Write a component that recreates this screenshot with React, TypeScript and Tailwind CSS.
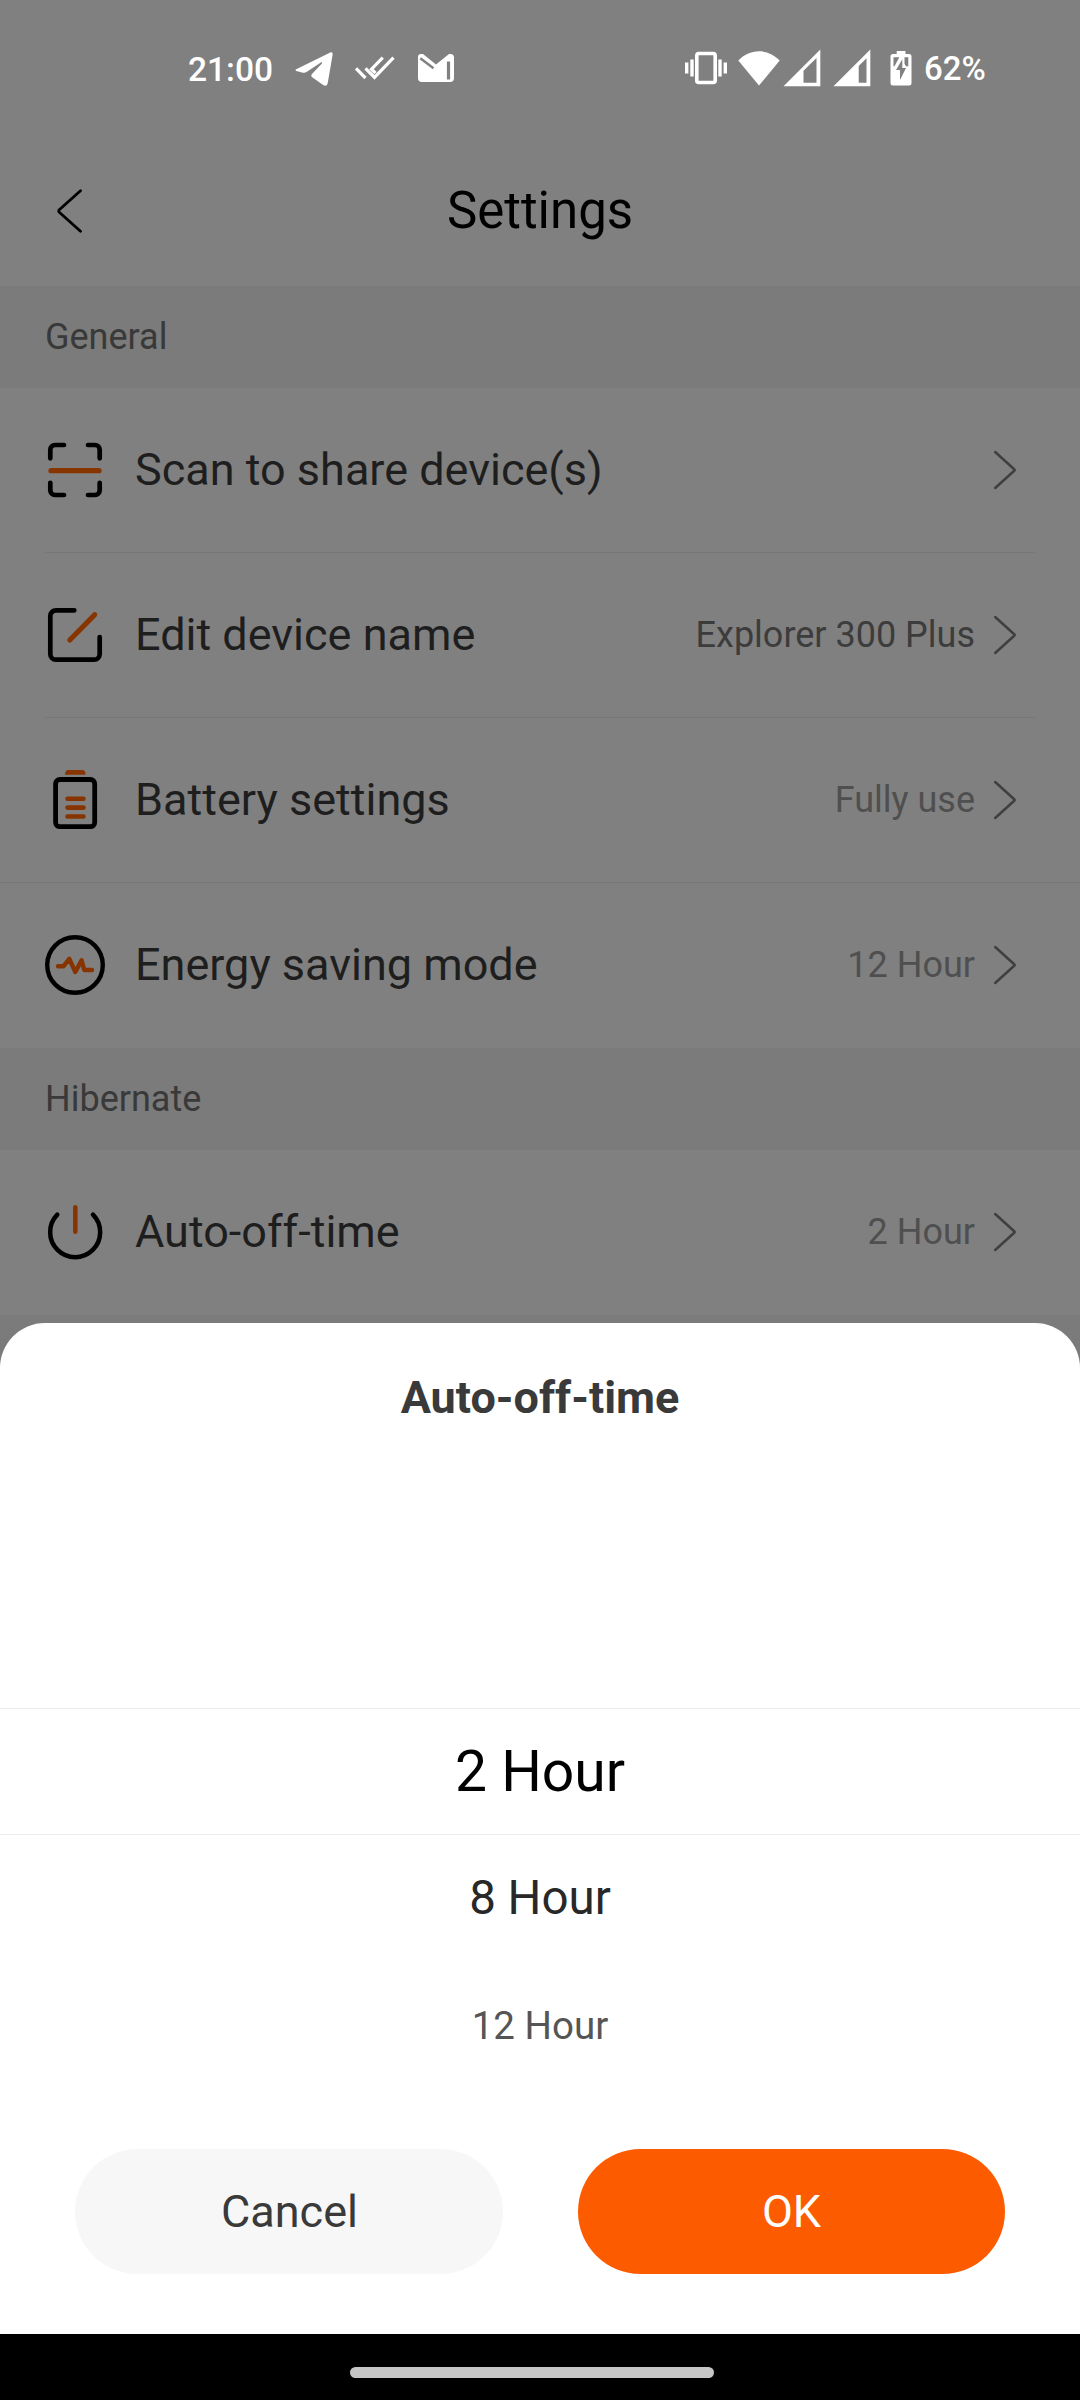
import type { ReactNode } from "react";

const INK = "#000000";
const ORANGE = "#863500";

function ScanIcon() {
  return (
    <svg width="60" height="60" viewBox="0 0 60 60" fill="none" strokeWidth="4.7" strokeLinecap="round">
      <path
        d="M5.3 18.3V9.7A4.7 4.7 0 0 1 10 5h9M43 5h7a4.700 4.700 0 0 1 4.700 4.700v8.600M5.300 42.800v7.500A4.700 4.700 0 0 0 10 55h9M43 55h7a4.700 4.700 0 0 0 4.700-4.700v-7.500"
        stroke={INK}
      />
      <path d="M6 30.700h48" stroke={ORANGE} strokeWidth="5.2" />
    </svg>
  );
}

function EditIcon() {
  return (
    <svg width="60" height="60" viewBox="0 0 60 60" fill="none" strokeWidth="4.7" strokeLinecap="round">
      <path d="M29.300 5.300H11a5.700 5.700 0 0 0-5.700 5.700v38a5.700 5.700 0 0 0 5.700 5.700h38a5.700 5.700 0 0 0 5.700-5.700V32" stroke={INK} />
      <path d="M24.800 35L49.700 9.700" stroke={ORANGE} strokeWidth="5.2" />
    </svg>
  );
}

function BatteryIcon() {
  return (
    <svg width="60" height="60" viewBox="0 0 60 60" fill="none" strokeWidth="4.8" strokeLinecap="round">
      <path d="M20 4.700c0-2.800 1.200-4.700 3.400-4.700h13.800c2.200 0 3.400 1.900 3.400 4.700z" fill={ORANGE} />
      <rect x="10.600" y="9.500" width="39.100" height="47.200" rx="4.300" stroke={INK} />
      <path d="M22.500 28.700h16M22.500 37.600h16M22.500 46.500h16" stroke={ORANGE} strokeWidth="4.600" />
    </svg>
  );
}

function EnergyIcon() {
  return (
    <svg width="60" height="60" viewBox="0 0 60 60" fill="none" strokeWidth="4.4" strokeLinecap="round" strokeLinejoin="round">
      <circle cx="30" cy="30" r="27.800" stroke={INK} />
      <path d="M13 31.300h5.300l6-7.500L30.300 37l6.300-11.700 2.700 9.700h7.700" stroke={ORANGE} />
    </svg>
  );
}

function PowerIcon() {
  return (
    <svg width="60" height="60" viewBox="0 0 60 60" fill="none" strokeWidth="4.5" strokeLinecap="round">
      <path d="M12.300 12.700a25 25 0 1 0 35.700 0" stroke={INK} />
      <path d="M30.300 5.300v24.500" stroke={ORANGE} />
    </svg>
  );
}

function Chevron() {
  return (
    <svg width="24" height="40" viewBox="0 0 24 40" fill="none" className="shrink-0">
      <path d="M2.200 2l19 17.200q1 .8 0 1.600L2.200 38" stroke="#3f3f3f" strokeWidth="2.5" strokeLinecap="round" />
    </svg>
  );
}

function StatusBar() {
  return (
    <div className="flex h-[136px] items-center pl-[188px] pr-[95px] text-[33.5px] font-medium text-white">
      <span className="w-[106px] pt-1">21:00</span>
      <svg width="40" height="36" viewBox="0 0 40 36" fill="#fff" className="mt-0.5">
        <path d="M2.200 18.300L35.800 1.700c1.900-.9 3.100.1 2.800 2L33.800 31.800c-.6 3.200-2.600 3.500-4.600 2.100L18.500 26.400c-1.700-1.300-1.600-2.400-.3-3.700L27.700 12.700c1-1.100.1-1.800-1.200-1L12.900 20.800c-1.700 1.100-3 1.200-5 .6l-5.500-1.500c-1.200-.4-1.300-1.100-.2-1.600z" />
      </svg>
      <svg width="42" height="26" viewBox="0 0 42 26" fill="none" stroke="#fff" strokeWidth="3.2" className="ml-5">
        <path d="M2 13.400l9.500 9.600M11.500 13.400l9 9L39.500 2.600M28.800 2.600L17.500 14.200l4 4" />
      </svg>
      <svg width="38" height="30" viewBox="0 0 38 30" className="ml-[21px]">
        <path d="M4 1h2l13 10.500L32 1h1.500a3.500 3.500 0 0 1 3.500 3.500V25a4 4 0 0 1-4 4H5a4 4 0 0 1-4-4V4a3 3 0 0 1 3-3z" fill="#fff" />
        <path d="M3.300 5.200L16.500 15.200" stroke="#808080" strokeWidth="2.4" />
        <path d="M31.500 8.500v18" stroke="#808080" strokeWidth="3.2" />
      </svg>

      <div className="ml-auto flex items-center">
        <svg width="44" height="34" viewBox="0 0 44 34" fill="none" stroke="#fff">
          <rect x="12.800" y="2.500" width="18.400" height="29" rx="2" strokeWidth="3.6" />
          <path d="M2.700 11.500v11M41.300 11.500v11" strokeWidth="3.4" />
          <path d="M8 8.500v17M36 8.500v17" strokeWidth="3.4" />
        </svg>
        <svg width="42" height="36" viewBox="0 0 42 36" fill="#fff" className="ml-2.5">
          <path d="M21 35.500L.3 10.500C6 4.800 13 1.300 21 1.300s15 3.500 20.700 9.200z" />
        </svg>
        <svg width="38" height="38" viewBox="0 0 38 38" className="ml-[3px]">
          <path d="M.5 37.300L37.300.5v36.800z" fill="#fff" />
          <path d="M20.500 21.700L33.500 9v24.700h-13z" fill="#808080" />
        </svg>
        <svg width="38" height="38" viewBox="0 0 38 38" className="ml-3">
          <path d="M.5 37.300L37.300.5v36.800z" fill="#fff" />
          <path d="M25.700 17L33.500 9.300v24.400h-7.800z" fill="#808080" />
        </svg>
        <svg width="22" height="36" viewBox="0 0 22 36" className="ml-[19px]">
          <path d="M6.700 1h8.800v3h3.500a2.500 2.500 0 0 1 2.500 2.500V33a2.500 2.500 0 0 1-2.500 2.500H3A2.500 2.500 0 0 1 .5 33V6.500A2.500 2.500 0 0 1 3 4h3.700z" fill="#fff" />
          <path d="M3.500 7.300h5.800L4.500 16.300h-1zM14.500 7.300h3.800v9h-2.300l-1.500-2.500zM12.300 9.300L6 20h4v10l6-12h-3.700z" fill="#808080" />
        </svg>
        <span className="ml-3 w-[61px] whitespace-nowrap text-[33px]">62%</span>
      </div>
    </div>
  );
}

function SectionTitle({ children }: { children: ReactNode }) {
  return (
    <div className="flex h-[102px] items-center bg-[#7b7b7b] px-[45px] text-[36px] text-[#393939]">
      {children}
    </div>
  );
}

type RowProps = {
  icon: ReactNode;
  label: string;
  value?: string;
  valueClass?: string;
  dividerClass?: string;
};

function Row({ icon, label, value, valueClass = "text-[#4f4f4f]", dividerClass = "" }: RowProps) {
  return (
    <div>
      <div className="flex h-[164px] items-center px-[45px]">
        {icon}
        <span className="ml-[30px] flex-1 pb-0.5 text-[45px] text-[#1e1e1e]">{label}</span>
        <span className={`mr-[18px] text-[36px] ${valueClass}`}>{value}</span>
        <div className="mr-[18px]">
          <Chevron />
        </div>
      </div>
      <div className={`h-px ${dividerClass}`} />
    </div>
  );
}

function TimePicker() {
  return (
    <div className="mt-[235px] flex flex-col items-center">
      <div className="flex h-[127px] w-full items-center justify-center border-y border-[#ececec] text-[57px] text-black">
        2 Hour
      </div>
      <div className="flex h-[127px] items-center text-[47.5px] text-[#282828]">8 Hour</div>
      <div className="flex h-[127px] items-center pt-0.5 text-[38.5px] text-[#555555]">12 Hour</div>
    </div>
  );
}

export default function App() {
  return (
    <div className="flex h-[2400px] w-[1080px] flex-col overflow-hidden bg-[#808080] font-['Roboto',sans-serif] leading-none">
      <StatusBar />

      <header className="grid h-[150px] grid-cols-[1fr_auto_1fr] items-center">
        <svg width="26" height="44" viewBox="0 0 26 44" fill="none" className="ml-[57px]">
          <path d="M23.500 1.800L2.300 20.800q-1.200 1.200 0 2.400L23.500 42.200" stroke="#000" strokeWidth="2.8" strokeLinecap="round" />
        </svg>
        <h1 className="pb-0.5 text-[51px] text-black">Settings</h1>
      </header>

      <SectionTitle>General</SectionTitle>
      <Row icon={<ScanIcon />} label="Scan to share device(s)" dividerClass="mx-[45px] bg-[#777777]" />
      <Row
        icon={<EditIcon />}
        label="Edit device name"
        value="Explorer 300 Plus"
        valueClass="text-[#3c3c3c]"
        dividerClass="mx-[45px] bg-[#777777]"
      />
      <Row icon={<BatteryIcon />} label="Battery settings" value="Fully use" dividerClass="bg-[#777777]" />
      <Row icon={<EnergyIcon />} label="Energy saving mode" value="12 Hour" />

      <SectionTitle>Hibernate</SectionTitle>
      <Row icon={<PowerIcon />} label="Auto-off-time" value="2 Hour" />

      <div className="bg-[#7b7b7b] pt-2">
        <div className="h-[1011px] rounded-t-[45px] bg-white">
          <h2 className="flex h-[150px] items-center justify-center pb-0.5 text-[45px] font-bold text-[#3a3a3a]">
            Auto-off-time
          </h2>
          <TimePicker />
          <div className="mt-[60px] flex gap-[75px] px-[75px] text-[45px]">
            <button className="h-[125px] flex-1 rounded-full bg-[#f7f7f7] pl-px text-[#3a3a3a]">Cancel</button>
            <button className="h-[125px] flex-1 rounded-full bg-[#fc5b00] text-white">OK</button>
          </div>
        </div>
      </div>

      <div className="flex flex-1 bg-black pl-[350px] pt-[33px]">
        <div className="h-[11px] w-[364px] rounded-full bg-[#c6c6c6]" />
      </div>
    </div>
  );
}
